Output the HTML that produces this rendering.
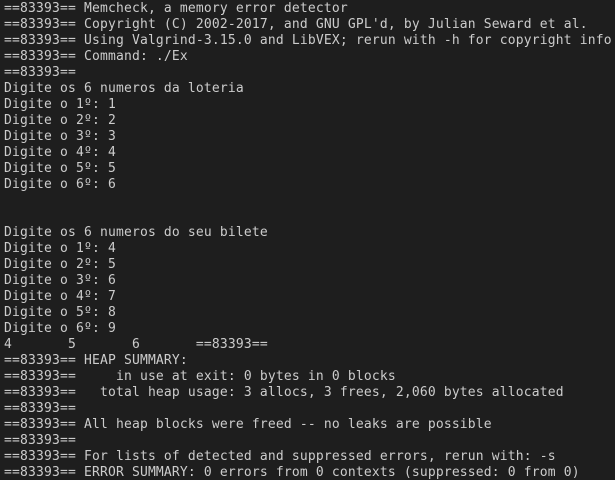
<!DOCTYPE html>
<html><head><meta charset="utf-8"><style>
html,body{margin:0;padding:0;background:#1e1e1e;width:615px;height:480px;overflow:hidden}
pre{margin:0;padding:1px 0 0 4px;font-family:"DejaVu Sans Mono","Liberation Mono",monospace;font-size:13px;letter-spacing:0.17px;line-height:16px;color:#cccccc;tab-size:8;-moz-tab-size:8;white-space:pre}
</style></head><body><pre>==83393== Memcheck, a memory error detector
==83393== Copyright (C) 2002-2017, and GNU GPL'd, by Julian Seward et al.
==83393== Using Valgrind-3.15.0 and LibVEX; rerun with -h for copyright info
==83393== Command: ./Ex
==83393==
Digite os 6 numeros da loteria
Digite o 1º: 1
Digite o 2º: 2
Digite o 3º: 3
Digite o 4º: 4
Digite o 5º: 5
Digite o 6º: 6


Digite os 6 numeros do seu bilete
Digite o 1º: 4
Digite o 2º: 5
Digite o 3º: 6
Digite o 4º: 7
Digite o 5º: 8
Digite o 6º: 9
4	5	6	==83393==
==83393== HEAP SUMMARY:
==83393==     in use at exit: 0 bytes in 0 blocks
==83393==   total heap usage: 3 allocs, 3 frees, 2,060 bytes allocated
==83393==
==83393== All heap blocks were freed -- no leaks are possible
==83393==
==83393== For lists of detected and suppressed errors, rerun with: -s
==83393== ERROR SUMMARY: 0 errors from 0 contexts (suppressed: 0 from 0)</pre></body></html>
